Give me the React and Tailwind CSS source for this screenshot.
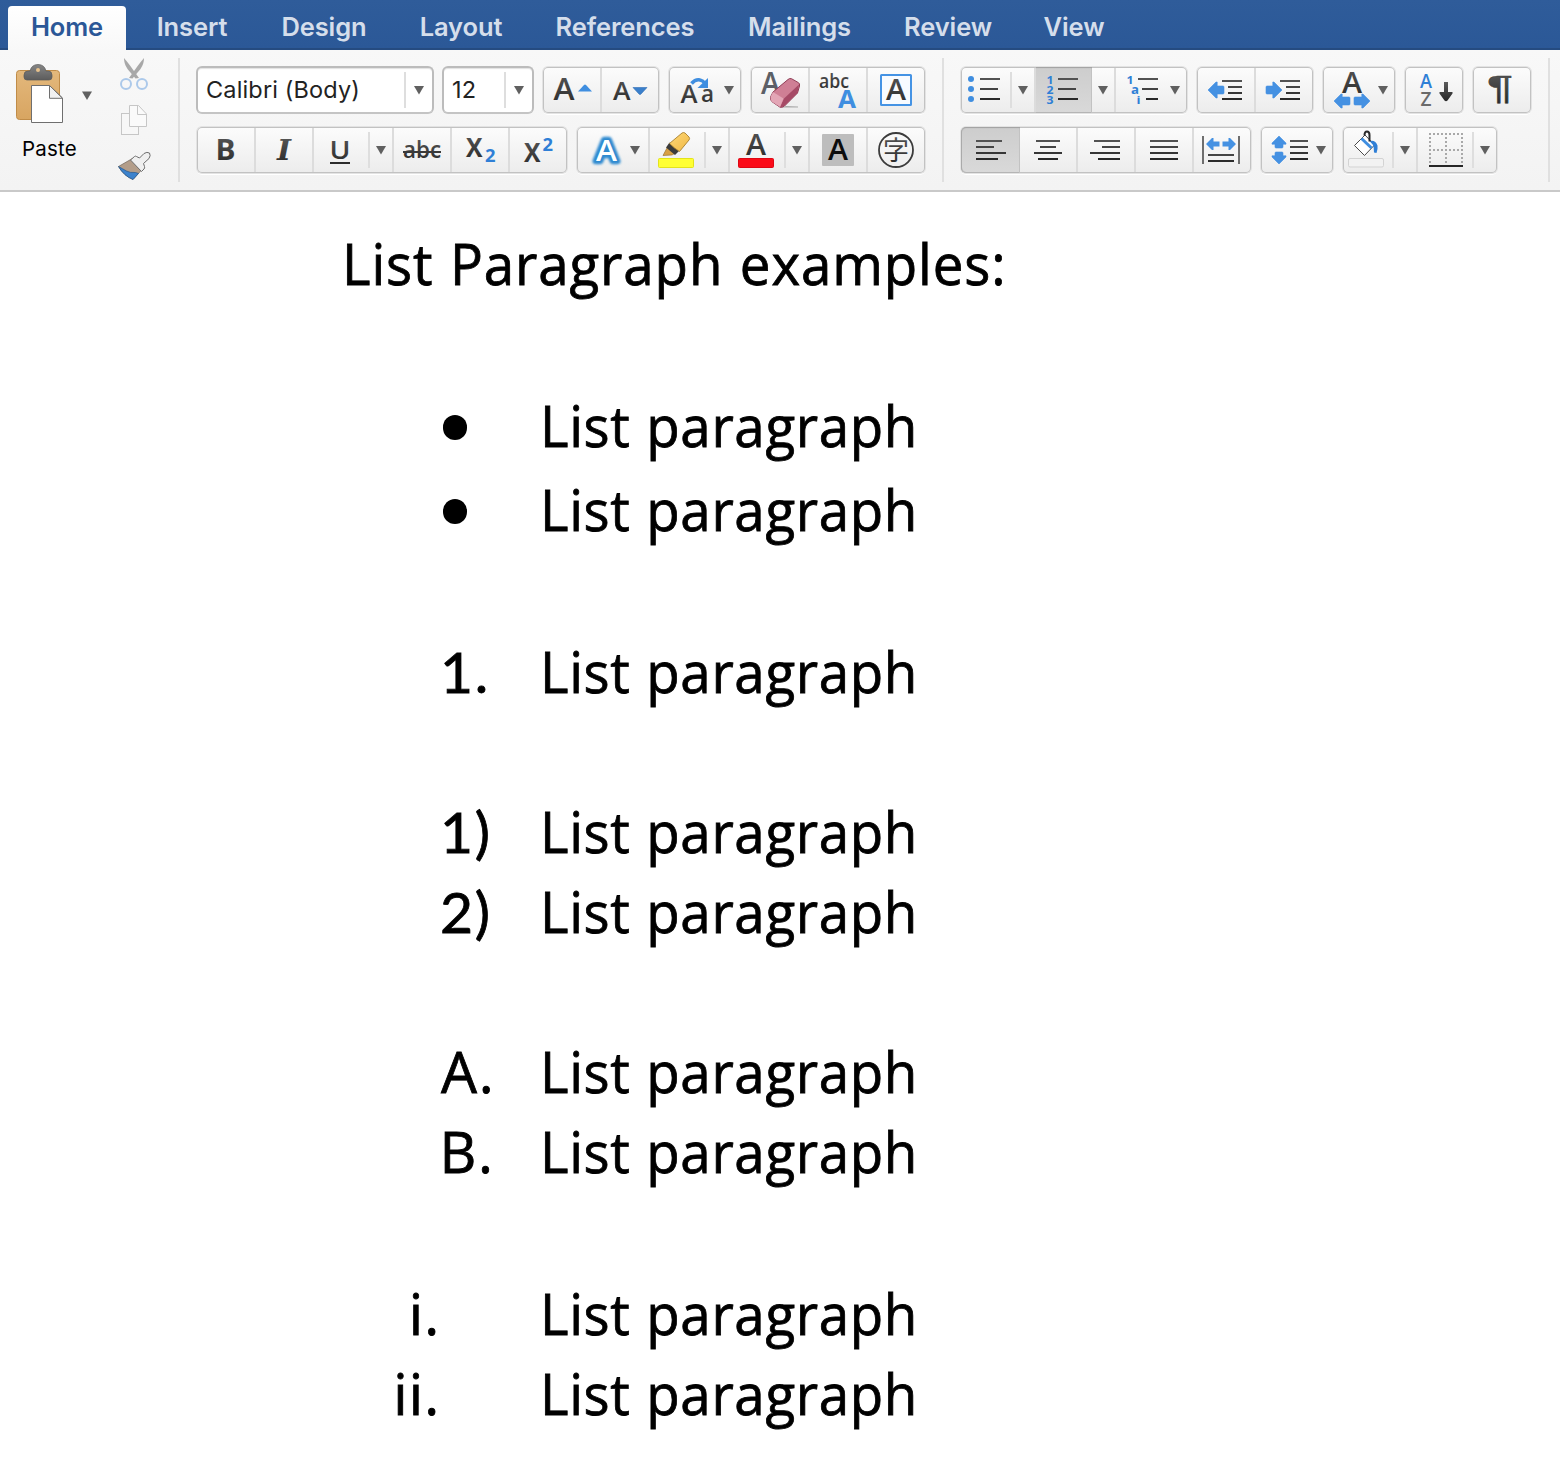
import React from "react";

const BLUE = "#3f8ee0";

const TABS = [
  { label: "Insert", cls: "w-[126px] ml-[3px]" },
  { label: "Design", cls: "w-[138px]" },
  { label: "Layout", cls: "w-[136px]" },
  { label: "References", cls: "w-[192px]" },
  { label: "Mailings", cls: "w-[157px]" },
  { label: "Review", cls: "w-[140px]" },
  { label: "View", cls: "w-[112px]" },
];

function Defs() {
  return (
    <svg width="0" height="0" className="absolute">
      <defs>
        <linearGradient id="ink" x1="0" y1="0" x2="0" y2="1">
          <stop offset="0" stopColor="#5c5c5c" />
          <stop offset="1" stopColor="#262626" />
        </linearGradient>
        <linearGradient id="board" x1="0" y1="0" x2="0" y2="1">
          <stop offset="0" stopColor="#e3b87c" />
          <stop offset="1" stopColor="#d8a561" />
        </linearGradient>
        <linearGradient id="clip" x1="0" y1="0" x2="0" y2="1">
          <stop offset="0" stopColor="#868686" />
          <stop offset="1" stopColor="#5c5c5c" />
        </linearGradient>
        <linearGradient id="marker" x1="0" y1="0" x2="1" y2="1">
          <stop offset="0" stopColor="#ffd878" />
          <stop offset="1" stopColor="#f0b945" />
        </linearGradient>
        <filter id="glow" x="-40%" y="-40%" width="180%" height="180%">
          <feGaussianBlur stdDeviation="0.8" />
        </filter>
      </defs>
    </svg>
  );
}

/* A drawing surface whose coordinates are those of the ribbon. */
function Art({ x, y, w, h = 46, children }) {
  return (
    <svg width={w} height={h} viewBox={`${x} ${y} ${w} ${h}`} className="block shrink-0 overflow-visible">
      {children}
    </svg>
  );
}

/* Text whose baseline starts at (x, y), set to the width w. */
function T({ x, y, s, w, c = "url(#ink)", wt = 600, f = "Open Sans", children, ...rest }) {
  return (
    <text
      x={x}
      y={y}
      fontSize={s}
      fontWeight={wt}
      fill={c}
      fontFamily={`"${f}", sans-serif`}
      textLength={w}
      lengthAdjust="spacingAndGlyphs"
      {...rest}
    >
      {children}
    </text>
  );
}

function Group({ children }) {
  return (
    <div className="flex h-[46px] shrink-0 rounded-[5px] bg-linear-to-b from-[#fcfcfc] to-[#ececec] shadow-[inset_0_0_0_1px_#c2c2c2,0_0_0_1px_#e3e3e3,0_2px_0_0_#ffffff]">
      {children}
    </div>
  );
}

function Div() {
  return <div className="my-px w-[2px] shrink-0 bg-[#dcdcdc]" />;
}

const Tri = ({ x, y }) => <path d={`M${x} ${y}h10l-5 8.400z`} fill="#606060" />;
const Short = ({ x, y }) => <rect x={x - 1} y={y} width="2" height="36" fill="#dedede" />;
const shade = (i) => ["#525252", "#444444", "#363636", "#282828"][i];

function Lines({ rows, y, step = 6 }) {
  return rows.map(([a, b], i) => (
    <rect key={i} x={a} y={y + i * step - 1} width={b - a} height="2" fill={shade(rows.length === 3 ? i + (i === 2 ? 1 : 0) : i)} />
  ));
}

/* Block arrow: tip at (x, y), pointing along the angle, length l. */
const Arrow = ({ x, y, a, l = 16, r = 8 }) => (
  <path
    d={`M0 0L${-r} ${-r}h-1.200v${r - 4}H${-l + 1}q-1 0 -1 1v6q0 1 1 1H${-r - 1.2}v${r - 4}h1.200z`}
    transform={`translate(${x} ${y}) rotate(${a})`}
    fill="#4591e2"
    stroke="#4591e2"
    strokeWidth="0.600"
    strokeLinejoin="round"
  />
);

function PasteArea() {
  return (
    <div className="flex w-[196px] shrink-0">
      <div className="flex w-[98px] flex-col">
        <Art x={0} y={50} w={98} h={80}>
          <rect x="16.5" y="70.5" width="43" height="49" rx="3" fill="url(#board)" stroke="#c08c48" />
          <path
            d="M27 80h22q3 0 3-3v-2q0-4-4-4h-2q-1.500-6.500-8-6.500t-8 6.500h-2q-4 0-4 4v2q0 3 3 3z"
            fill="url(#clip)"
            stroke="#5a5a5a"
            strokeWidth="0.700"
          />
          <circle cx="38" cy="70" r="2" fill="#e8c28c" />
          <path d="M31.500 85.500h18l13 12.500v24.500h-31z" fill="#ffffff" stroke="#6f6f6f" />
          <path d="M49.500 85.500v12.800h13z" fill="#f1f1f1" stroke="#6f6f6f" strokeLinejoin="round" />
          <Tri x={82} y={91.5} />
        </Art>
        <div className="w-[99px] text-center font-['Inter'] text-[20.5px] leading-[38px] tracking-[0.2px] text-black">Paste</div>
      </div>
      <Art x={98} y={50} w={98} h={140}>
        <path d="M124 58q0 6 3.500 11l8 9.500 3.500-.5-9-12.500q-3-4-6-7.500z" fill="#a8a8a8" />
        <path d="M144 58q0 6-3.500 11l-8 9.500-3.500-.5 9-12.500q3-4 6-7.500z" fill="#a8a8a8" />
        <circle cx="126" cy="84" r="5" fill="none" stroke="#acc9ea" strokeWidth="2" />
        <circle cx="142" cy="84" r="5" fill="none" stroke="#acc9ea" strokeWidth="2" />
        <rect x="121.500" y="113.500" width="17" height="21" fill="#f7f7f7" stroke="#c6c6c6" />
        <path d="M129.500 105.500h9l8 8.500v12.500h-17z" fill="#fafafa" stroke="#c6c6c6" />
        <path d="M137.500 105.500v9h9" fill="none" stroke="#c6c6c6" />
        <path d="M118.500 166.500l13-7.500q2-1.500 3.500.5l6.500 7.500q1 1.500 0 3l-8.500 9.500q-9-3.500-14.500-13z" fill="#b39d89" stroke="#6f6357" strokeWidth="0.700" />
        <path d="M118.500 166.500q4.500 2.500 8 4.500t9 1.500l3 1-5.500 6q-9-3.500-14.500-13z" fill="#3c82cc" stroke="#24588f" strokeWidth="0.700" />
        <path
          d="M130.500 160l4-3.500q1-.8 2 0l3 1.500 4.500-4.500q3-2 5.500-.5 1.500 2.500-.5 5.500l-5.500 5 1 3q.5 1.500-.5 2.500l-2.500 2.500z"
          fill="#efefef"
          stroke="#6d6d6d"
          strokeLinejoin="round"
        />
        <rect x="178" y="58" width="2" height="124" fill="#e0e0e0" />
      </Art>
    </div>
  );
}

function Combo({ cls, label, x, w, tri }) {
  return (
    <div
      className={
        "flex h-[48px] shrink-0 items-center rounded-[6px] border-2 border-[#bcbcbc] border-b-[#c4c4c4] bg-white shadow-[inset_0_2px_1px_-1px_#e2e2e2] " + cls
      }
    >
      <span className="grow pl-[8px] font-['Inter'] text-[23.5px] leading-none tracking-[0.15px] text-[#222222]">{label}</span>
      <Art x={x} y={68} w={w} h={44}>
        <Short x={x + 1} y={72} />
        <Tri x={tri} y={86} />
      </Art>
    </div>
  );
}

function FontTop() {
  return (
    <div className="-ml-px flex h-[48px] items-center gap-[10px]">
      <div className="flex gap-[8px]">
        <Combo cls="w-[238px]" label="Calibri (Body)" x={404} w={28} tri={414} />
        <Combo cls="w-[92px]" label="12" x={504} w={28} tri={514} />
      </div>
      <div className="-ml-px flex gap-[10px]">
        <Group>
          <Art x={543} y={67} w={57}>
            <T x={553.5} y={100} s={30} w={21}>A</T>
            <path d="M578 91.500l6-6.500q1-1 2 0l6 6.500z" fill={BLUE} />
          </Art>
          <Div />
          <Art x={602} y={67} w={57}>
            <T x={613} y={99.5} s={25} w={17.5}>A</T>
            <path d="M633 87.500h14l-6 6.500q-1 1-2 0z" fill="#3a7fcb" stroke="#2f6db4" strokeWidth="0.600" />
          </Art>
        </Group>
        <Group>
          <Art x={669} y={67} w={72}>
            <T x={680.5} y={102.5} s={26} w={17}>A</T>
            <T x={701} y={102} s={23} w={13}>a</T>
            <path d="M691.500 83.500q4-4.500 8.500-3.500 3 .5 5 3.500" fill="none" stroke={BLUE} strokeWidth="3.600" />
            <path d="M708 78v10h-10.500z" fill={BLUE} />
            <Tri x={724} y={86} />
          </Art>
        </Group>
        <Group>
          <Art x={751} y={67} w={57}>
            <T x={761} y={94} s={30.5} w={19} c="#5c5f66">A</T>
            <path d="M782 107.500h16v-1l-12-.5z" fill="#a9a9a9" />
            <path d="M770.500 97l2.500-5 15-12.500q1.500-1.500 3.500-.8l7 4q1.500 1 1 3.300l-2 7-13 13q-2 1.800-4.500 1.200l-8-5.500q-2-1.700-1.500-4.700z" fill="#cf7f95" stroke="#8f3c55" />
            <path d="M784 98.500l15-14-1.500 8.500-14 13.500q-2 1-3.500.7z" fill="#a64a66" />
            <path d="M773 92l10.500 6.500-3.500 8.500-8-5.300q-1.500-1.700-1.500-4.700z" fill="#e3a6b6" />
          </Art>
          <Div />
          <Art x={810} y={67} w={56}>
            <T x={819} y={88} s={19.5} w={30}>abc</T>
            <T x={838} y={107.5} s={24.5} w={18} wt={700} c={BLUE}>A</T>
          </Art>
          <Div />
          <Art x={868} y={67} w={57}>
            <rect x="881" y="75" width="30" height="30" rx="0.500" fill="#f8fbff" stroke="#4593e4" strokeWidth="2" />
            <T x={886} y={100} s={28.5} w={20}>A</T>
          </Art>
        </Group>
      </div>
    </div>
  );
}

function FontBottom() {
  return (
    <div className="flex gap-[10px]">
      <Group>
        <Art x={197} y={127} w={57}>
          <T x={215.5} y={160} s={28} w={20} wt={700}>B</T>
        </Art>
        <Div />
        <Art x={256} y={127} w={56}>
          <T x={277} y={160} s={27.5} w={14} wt={700} f="DejaVu Serif" fontStyle="italic">I</T>
        </Art>
        <Div />
        <Art x={314} y={127} w={78}>
          <T x={329.5} y={158.5} s={26} w={21}>U</T>
          <rect x="330" y="162" width="20" height="2" fill="#2c2c2c" />
          <Short x={369} y={132} />
          <Tri x={376} y={146} />
        </Art>
        <Div />
        <Art x={394} y={127} w={56}>
          <T x={403} y={158} s={23} w={38}>abc</T>
          <rect x="403" y="151" width="38" height="2" fill="#3a3a3a" />
        </Art>
        <Div />
        <Art x={452} y={127} w={56}>
          <T x={466} y={156.5} s={26} w={16.5} wt={700}>X</T>
          <T x={485} y={162} s={17.5} w={10.5} wt={700} c="#2f7fd6">2</T>
        </Art>
        <Div />
        <Art x={510} y={127} w={57}>
          <T x={524} y={162} s={26} w={16.5} wt={700}>X</T>
          <T x={542.5} y={150.5} s={17.5} w={10.5} wt={700} c="#2f7fd6">2</T>
        </Art>
      </Group>
      <Group>
        <Art x={577} y={127} w={71}>
          <T x={596} y={160.5} s={29} w={21} c="none" stroke="#2f8ad0" strokeWidth="6.5" strokeLinejoin="round" filter="url(#glow)">A</T>
          <T x={596} y={160.5} s={29} w={21} c="#ffffff" aria-hidden="true">A</T>
          <Tri x={630} y={146} />
        </Art>
        <Div />
        <Art x={650} y={127} w={78}>
          <path d="M663 155.500l4.500-8.500 8 6-3.500 2z" fill="#d8a045" stroke="#8c6425" strokeWidth="0.600" />
          <path d="M666 147.500l3.500-5 9.500 8.500-4 4z" fill="#3b3b3b" />
          <path d="M669.500 143.500l12.500-10.500q1.500-1 3 0l4 4q1.200 1.500 0 3l-9.500 11.500q-5-3-10-8z" fill="url(#marker)" stroke="#a8802e" strokeWidth="0.900" />
          <rect x="658.500" y="158.500" width="35" height="9" rx="1" fill="#ffff33" stroke="#e3e31c" />
          <Short x={705} y={132} />
          <Tri x={712} y={146} />
        </Art>
        <Div />
        <Art x={730} y={127} w={78}>
          <T x={746} y={154.5} s={28.5} w={20}>A</T>
          <rect x="738.500" y="158.500" width="35" height="9" rx="1" fill="#fb0b18" stroke="#dd0713" />
          <Short x={785} y={132} />
          <Tri x={792} y={146} />
        </Art>
        <Div />
        <Art x={810} y={127} w={56}>
          <rect x="822" y="134" width="32" height="32" rx="1" fill="#bdbdbd" />
          <T x={828} y={160} s={28} w={20} c="#0d0d0d">A</T>
        </Art>
        <Div />
        <Art x={868} y={127} w={57}>
          <circle cx="896" cy="150" r="17" fill="none" stroke="#3c3c3c" strokeWidth="1.800" />
          <T x={883} y={160} s={26} w={26} wt={400} f="Noto Sans CJK JP">字</T>
        </Art>
      </Group>
    </div>
  );
}

function Pressed({ left, children }) {
  return (
    <div
      className={
        "h-[46px] shrink-0 bg-linear-to-b from-[#cdcdcd] via-[#d3d3d3] to-[#d9d9d9] shadow-[inset_0_2px_1px_-1px_#a0a0a0,inset_-1px_0_0_0_#c2c2c2,inset_0_-1px_0_0_#b5b5b5] " +
        (left ? "rounded-l-[5px] border-l border-[#aaaaaa]" : "")
      }
    >
      {children}
    </div>
  );
}

function ParaTop() {
  return (
    <div className="flex gap-[10px]">
      <Group>
        <Art x={961} y={67} w={73}>
          <circle cx="971" cy="79" r="3" fill={BLUE} />
          <circle cx="971" cy="89" r="3" fill={BLUE} />
          <circle cx="971" cy="99" r="3" fill={BLUE} />
          <Lines y={79} step={10} rows={[[980, 1000], [980, 998], [980, 1000]]} />
          <Short x={1011} y={72} />
          <Tri x={1018} y={86} />
        </Art>
        <Div />
        <Pressed>
          <Art x={1036} y={67} w={56}>
            <T x={1046.5} y={83.5} s={10.5} w={7} wt={700} c="#2f7fd6">1</T>
            <T x={1046.5} y={94} s={10.5} w={7} wt={700} c="#2f7fd6">2</T>
            <T x={1046.5} y={104} s={10.5} w={7} wt={700} c="#2f7fd6">3</T>
            <Lines y={79} step={10} rows={[[1058, 1078], [1058, 1076], [1058, 1078]]} />
          </Art>
        </Pressed>
        <Art x={1092} y={67} w={22}>
          <Tri x={1098} y={86} />
        </Art>
        <Div />
        <Art x={1116} y={67} w={71}>
          <T x={1126.5} y={84} s={10.5} w={7} wt={700} c="#2f7fd6">1</T>
          <T x={1131} y={94} s={13} w={8} wt={700} c="#2f7fd6">a</T>
          <T x={1136.5} y={104} s={10.5} w={4} wt={700} c="#2f7fd6">i</T>
          <Lines y={79} step={10} rows={[[1138, 1158], [1142, 1158], [1146, 1158]]} />
          <Tri x={1170} y={86} />
        </Art>
      </Group>
      <Group>
        <Art x={1197} y={67} w={57}>
          <Arrow x={1208} y={90} a={180} />
          <Lines y={81} rows={[[1222, 1242], [1228, 1242], [1228, 1242], [1222, 1242]]} />
        </Art>
        <Div />
        <Art x={1256} y={67} w={57}>
          <Arrow x={1282} y={90} a={0} />
          <Lines y={81} rows={[[1280, 1300], [1286, 1300], [1286, 1300], [1280, 1300]]} />
        </Art>
      </Group>
      <Group>
        <Art x={1323} y={67} w={72}>
          <T x={1342} y={92.5} s={28.5} w={20}>A</T>
          <Arrow x={1334} y={101} a={180} r={7} />
          <Arrow x={1370} y={101} a={0} r={7} />
          <Tri x={1378} y={86} />
        </Art>
      </Group>
      <Group>
        <Art x={1405} y={67} w={58}>
          <T x={1420} y={88} s={20} w={12} c="#2f7fd6">A</T>
          <T x={1420.5} y={106} s={20} w={11} c="#6a6a6a">Z</T>
          <path d="M1444 82h4v10h4.500v1.500l-5 7q-1.500 1.500-3 0l-5-7v-1.500h4.500z" fill="url(#ink)" />
        </Art>
      </Group>
      <Group>
        <Art x={1473} y={67} w={58}>
          <T x={1487} y={99} s={33} w={26} wt={400} f="Liberation Sans" stroke="#3c3c3c" strokeWidth="0.5">¶</T>
        </Art>
      </Group>
    </div>
  );
}

function ParaBottom() {
  return (
    <div className="flex gap-[10px]">
      <Group>
        <Pressed left>
          <Art x={962} y={127} w={58}>
            <Lines y={141} rows={[[976, 1002], [976, 994], [976, 1006], [976, 998]]} />
          </Art>
        </Pressed>
        <Art x={1020} y={127} w={56}>
          <Lines y={141} rows={[[1036, 1060], [1040, 1056], [1034, 1062], [1038, 1058]]} />
        </Art>
        <Div />
        <Art x={1078} y={127} w={56}>
          <Lines y={141} rows={[[1094, 1120], [1102, 1120], [1090, 1120], [1098, 1120]]} />
        </Art>
        <Div />
        <Art x={1136} y={127} w={56}>
          <Lines y={141} rows={[[1150, 1178], [1150, 1178], [1150, 1178], [1150, 1178]]} />
        </Art>
        <Div />
        <Art x={1194} y={127} w={57}>
          <rect x="1202" y="136" width="2" height="28" fill="#6e6e6e" />
          <rect x="1238" y="136" width="2" height="28" fill="#6e6e6e" />
          <path d="M1206 144l6-6h1.500v3.500h6v5h-6v3.500h-1.500z" fill="#4591e2" />
          <path d="M1236 144l-6-6h-1.500v3.500h-6v5h6v3.500h1.500z" fill="#4591e2" />
          <rect x="1208" y="154" width="26" height="2" fill="#444444" />
          <rect x="1208" y="160" width="26" height="2" fill="#2c2c2c" />
        </Art>
      </Group>
      <Group>
        <Art x={1261} y={127} w={72}>
          <Arrow x={1279} y={136} a={270} l={12} r={7} />
          <Arrow x={1279} y={164} a={90} l={12} r={7} />
          <Lines y={141} rows={[[1290, 1308], [1290, 1308], [1290, 1308], [1290, 1308]]} />
          <Tri x={1316} y={146} />
        </Art>
      </Group>
      <Group>
        <Art x={1343} y={127} w={73}>
          <path d="M1365 135l9.500 10-10 10.500-10-10z" fill="#ffffff" stroke="#4a4a4a" strokeLinejoin="round" />
          <path d="M1361.500 138.500l10 9.500" stroke={BLUE} strokeWidth="3" fill="none" />
          <path d="M1369.500 141q6-1.500 8 4.500.5 4-1 7.500l-2.500-.5q0-5-1-7.500z" fill="#2f7fd6" />
          <path d="M1364.500 135.500q0-4 2.500-4t2.500 3.500v6.500" fill="none" stroke="#2a2a2a" strokeWidth="2" />
          <rect x="1348.500" y="158.500" width="35" height="8.500" rx="1.500" fill="#f2f2f2" stroke="#d3d3d3" />
          <Short x={1393} y={132} />
          <Tri x={1400} y={146} />
        </Art>
        <Div />
        <Art x={1418} y={127} w={79}>
          <path
            d="M1429 134h34M1430 137v28M1462 137v28M1446 137v28M1429 150h34"
            fill="none"
            stroke="#a9a9a9"
            strokeWidth="2"
            strokeDasharray="2 2"
          />
          <rect x="1429" y="165" width="34" height="2" fill="#262626" />
          <Short x={1473} y={132} />
          <Tri x={1480} y={146} />
        </Art>
      </Group>
    </div>
  );
}

function Ribbon() {
  return (
    <div className="flex h-[142px] border-b-2 border-[#c9c9c9] bg-linear-to-b from-[#f8f8f8] to-[#f3f3f3]">
      <PasteArea />
      <div className="ml-px flex w-[746px] shrink-0 flex-col pt-[16px]">
        <FontTop />
        <div className="mt-[13px]">
          <FontBottom />
        </div>
      </div>
      <div className="-ml-px mt-[8px] h-[124px] w-[2px] shrink-0 bg-[#e0e0e0]" />
      <div className="ml-[17px] flex w-[587px] shrink-0 flex-col gap-[14px] pt-[17px]">
        <ParaTop />
        <ParaBottom />
      </div>
      <div className="mt-[8px] h-[124px] w-[2px] shrink-0 bg-[#e0e0e0]" />
    </div>
  );
}

const Item = ({ mark, mcls }) => (
  <li className="flex h-[80px]">
    <span className={"w-[540px] shrink-0 " + mcls}>{mark}</span>
    <span className="origin-left scale-x-[0.96] tracking-[0.65px] whitespace-nowrap [word-spacing:1px]">List paragraph</span>
  </li>
);

const Bullet = () => <span className="mt-[30px] block h-[25px] w-[24.5px] rounded-full bg-black" />;

export default function App() {
  return (
    <div className="h-[1462px] w-[1560px] overflow-hidden bg-white">
      <Defs />
      <nav className="flex h-[50px] border-b-2 border-[#254b80] bg-linear-to-b from-[#2f5c9a] to-[#2b5897] pl-[8px] font-['Inter'] text-[25.5px] font-semibold tracking-[-0.1px] text-[#d5deeb]">
        <div className="mt-[6px] h-[44px] w-[118px] rounded-t-[4px] bg-linear-to-b from-white to-[#f8f8f8] text-center leading-[42px] text-[#2b5797]">Home</div>
        {TABS.map((t) => (
          <div key={t.label} className={"text-center leading-[54px] " + t.cls}>
            {t.label}
          </div>
        ))}
      </nav>
      <Ribbon />
      <main className="pt-[31px] font-['Open_Sans'] text-[57px] leading-[80px] font-normal text-black [-webkit-text-stroke:0.8px_#000]">
        <h1 className="ml-[342px] h-[80px] w-max origin-left scale-x-[0.96] tracking-[0.9px] whitespace-nowrap [word-spacing:1.5px]">List Paragraph examples:</h1>
        <ul className="mt-[82px] flex flex-col gap-[4px]">
          <Item mark={<Bullet />} mcls="pl-[442.5px]" />
          <Item mark={<Bullet />} mcls="pl-[442.5px]" />
        </ul>
        <ol className="mt-[82px]">
          <Item mark="1." mcls="pl-[440px] font-['Lato'] tracking-[1.8px]" />
        </ol>
        <ol className="mt-[80px]">
          <Item mark="1)" mcls="pl-[440px] font-['Lato'] tracking-[1.8px]" />
          <Item mark="2)" mcls="pl-[440px] font-['Lato'] tracking-[1.8px]" />
        </ol>
        <ol className="mt-[80px]">
          <Item mark="A." mcls="pl-[441px] tracking-[1.8px]" />
          <Item mark="B." mcls="pl-[439.5px] tracking-[1.8px]" />
        </ol>
        <ol className="mt-[82px]">
          <Item mark="i." mcls="pr-[99.5px] text-right tracking-[1.2px]" />
          <Item mark="ii." mcls="pr-[99.5px] text-right tracking-[1.2px]" />
        </ol>
      </main>
    </div>
  );
}
